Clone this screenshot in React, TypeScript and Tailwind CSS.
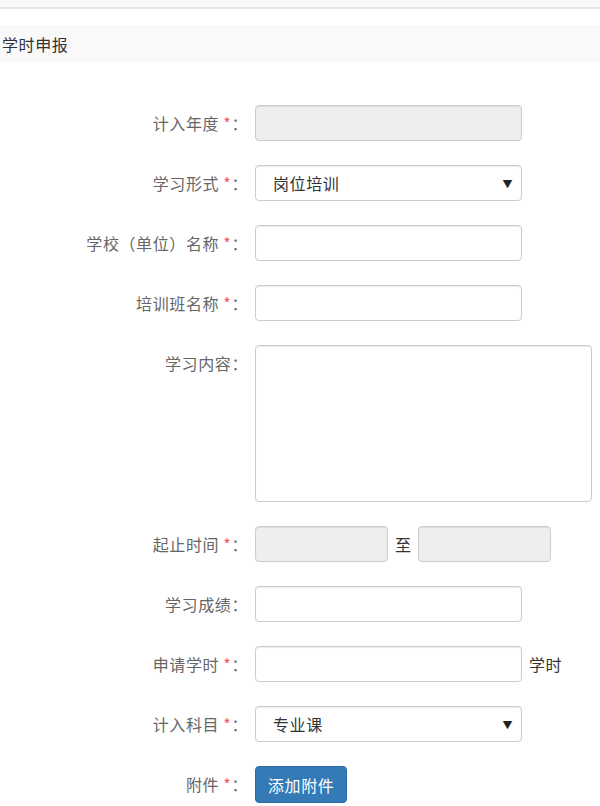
const font = { fontFamily: '"Microsoft YaHei", "Noto Sans CJK SC", "Noto Sans", sans-serif' };

function Label({ text, required }: { text: string; required?: boolean }) {
  return (
    <div className="w-[248px] shrink-0 text-right text-[16px] leading-[36px] tracking-[0.6px] text-[#666]">
      {text}
      {required && <span className="text-[#f4516c]"> *</span>}
      <span>：</span>
    </div>
  );
}

function Input({ disabled, className = "w-[267px]" }: { disabled?: boolean; className?: string }) {
  return (
    <input
      disabled={disabled}
      className={`h-9 rounded-[4px] border border-[#ccc] px-3 text-[16px] text-[#333] shadow-[inset_0_1px_1px_rgba(0,0,0,0.075)] outline-none ${
        disabled ? "bg-[#eee]" : "bg-white"
      } ${className}`}
    />
  );
}

function Select({ value }: { value: string }) {
  return (
    <div className="flex h-9 w-[267px] items-center justify-between rounded-[4px] border border-[#ccc] bg-white pl-[17px] pr-[8px] text-[16px] tracking-[0.6px] text-[#333] shadow-[inset_0_1px_1px_rgba(0,0,0,0.075)]">
      <span>{value}</span>
      <span className="text-[10px] text-[#222]">▼</span>
    </div>
  );
}

export default function App() {
  return (
    <div className="h-[806px] w-[600px] overflow-hidden bg-white" style={font}>
      <div className="h-[9px] border-b-2 border-[#e6e6e6] bg-[#f8f8f8]" />
      <div className="mt-4 flex h-[37px] items-center bg-[#f9f9f9] pl-[2px] text-[16px] tracking-[0.6px] text-[#333]">
        学时申报
      </div>

      <div className="mt-[43px] flex flex-col gap-6">
        <div className="flex items-start gap-[7px]">
          <Label text="计入年度" required />
          <Input disabled />
        </div>
        <div className="flex items-start gap-[7px]">
          <Label text="学习形式" required />
          <Select value="岗位培训" />
        </div>
        <div className="flex items-start gap-[7px]">
          <Label text="学校（单位）名称" required />
          <Input />
        </div>
        <div className="flex items-start gap-[7px]">
          <Label text="培训班名称" required />
          <Input />
        </div>
        <div className="flex items-start gap-[7px]">
          <Label text="学习内容" />
          <textarea className="h-[157px] w-[337px] resize-none rounded-[4px] border border-[#ccc] bg-white shadow-[inset_0_1px_1px_rgba(0,0,0,0.075)] outline-none" />
        </div>
        <div className="flex items-start gap-[7px]">
          <Label text="起止时间" required />
          <div className="flex items-center">
            <Input disabled className="w-[133px]" />
            <span className="mx-[7px] text-[16px] text-[#333]">至</span>
            <Input disabled className="w-[133px]" />
          </div>
        </div>
        <div className="flex items-start gap-[7px]">
          <Label text="学习成绩" />
          <Input />
        </div>
        <div className="flex items-start gap-[7px]">
          <Label text="申请学时" required />
          <div className="flex items-center gap-[7px]">
            <Input />
            <span className="text-[16px] tracking-[0.6px] text-[#333]">学时</span>
          </div>
        </div>
        <div className="flex items-start gap-[7px]">
          <Label text="计入科目" required />
          <Select value="专业课" />
        </div>
        <div className="flex items-start gap-[7px]">
          <Label text="附件" required />
          <button className="h-[37px] rounded-[4px] border border-[#2e6da4] bg-[#337ab7] px-[12px] text-[16px] tracking-[0.6px] text-white">
            添加附件
          </button>
        </div>
      </div>
    </div>
  );
}
